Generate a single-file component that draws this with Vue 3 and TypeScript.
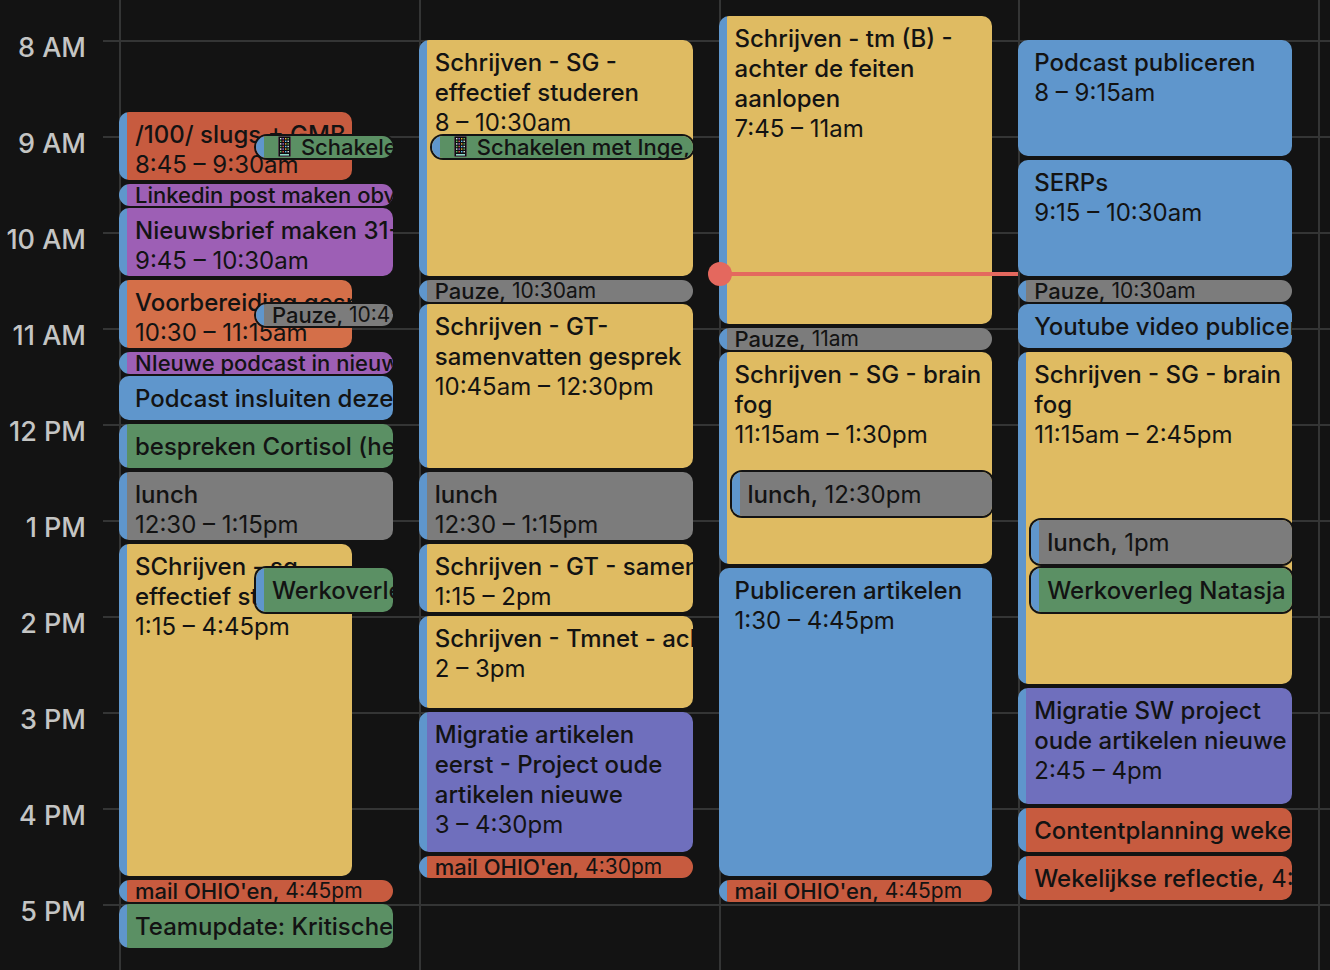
<script setup lang="ts">
type Tone = 'red' | 'orange' | 'yellow' | 'green' | 'blue' | 'indigo' | 'purple' | 'gray'
type Lane = 'full' | 'narrow' | 'half' | 'inset'

interface CalendarEvent {
  title: string
  time?: string
  start: number
  end: number
  tone: Tone
  lane?: Lane
  phone?: boolean
}

interface Day {
  id: string
  events: CalendarEvent[]
  now?: number
}

const FIRST_HOUR = 7.75
const QUARTER_HEIGHT = 24

const hours = ['8 AM', '9 AM', '10 AM', '11 AM', '12 PM', '1 PM', '2 PM', '3 PM', '4 PM', '5 PM']

const days: Day[] = [
  {
    id: 'day-1',
    events: [
      { title: '/100/ slugs + GMB', time: '8:45 – 9:30am', start: 8.75, end: 9.5, tone: 'red', lane: 'narrow' },
      { title: 'Schakelen', start: 9, end: 9.25, tone: 'green', lane: 'half', phone: true },
      { title: 'Linkedin post maken obv', start: 9.5, end: 9.75, tone: 'purple' },
      { title: 'Nieuwsbrief maken 31-', time: '9:45 – 10:30am', start: 9.75, end: 10.5, tone: 'purple' },
      { title: 'Voorbereiding gesprek', time: '10:30 – 11:15am', start: 10.5, end: 11.25, tone: 'orange', lane: 'narrow' },
      { title: 'Pauze', time: '10:45am', start: 10.75, end: 11, tone: 'gray', lane: 'half' },
      { title: 'NIeuwe podcast in nieuw', start: 11.25, end: 11.5, tone: 'purple' },
      { title: 'Podcast insluiten deze', start: 11.5, end: 12, tone: 'blue' },
      { title: 'bespreken Cortisol (he', start: 12, end: 12.5, tone: 'green' },
      { title: 'lunch', time: '12:30 – 1:15pm', start: 12.5, end: 13.25, tone: 'gray' },
      { title: 'SChrijven - sg- effectief studeren', time: '1:15 – 4:45pm', start: 13.25, end: 16.75, tone: 'yellow', lane: 'narrow' },
      { title: 'Werkoverleg', start: 13.5, end: 14, tone: 'green', lane: 'half' },
      { title: "mail OHIO'en", time: '4:45pm', start: 16.75, end: 17, tone: 'red' },
      { title: 'Teamupdate: Kritische', start: 17, end: 17.5, tone: 'green' },
    ],
  },
  {
    id: 'day-2',
    events: [
      { title: 'Schrijven - SG - effectief studeren', time: '8 – 10:30am', start: 8, end: 10.5, tone: 'yellow' },
      { title: 'Schakelen met Inge,', start: 9, end: 9.25, tone: 'green', lane: 'inset', phone: true },
      { title: 'Pauze', time: '10:30am', start: 10.5, end: 10.75, tone: 'gray' },
      { title: 'Schrijven - GT- samenvatten gesprek', time: '10:45am – 12:30pm', start: 10.75, end: 12.5, tone: 'yellow' },
      { title: 'lunch', time: '12:30 – 1:15pm', start: 12.5, end: 13.25, tone: 'gray' },
      { title: 'Schrijven - GT - samen', time: '1:15 – 2pm', start: 13.25, end: 14, tone: 'yellow' },
      { title: 'Schrijven - Tmnet - ach', time: '2 – 3pm', start: 14, end: 15, tone: 'yellow' },
      { title: 'Migratie artikelen eerst - Project oude artikelen nieuwe', time: '3 – 4:30pm', start: 15, end: 16.5, tone: 'indigo' },
      { title: "mail OHIO'en", time: '4:30pm', start: 16.5, end: 16.75, tone: 'red' },
    ],
  },
  {
    id: 'day-3',
    now: 10 + 5 / 12,
    events: [
      { title: 'Schrijven - tm (B) - achter de feiten aanlopen', time: '7:45 – 11am', start: 7.75, end: 11, tone: 'yellow' },
      { title: 'Pauze', time: '11am', start: 11, end: 11.25, tone: 'gray' },
      { title: 'Schrijven - SG - brain fog', time: '11:15am – 1:30pm', start: 11.25, end: 13.5, tone: 'yellow' },
      { title: 'lunch', time: '12:30pm', start: 12.5, end: 13, tone: 'gray', lane: 'inset' },
      { title: 'Publiceren artikelen', time: '1:30 – 4:45pm', start: 13.5, end: 16.75, tone: 'blue' },
      { title: "mail OHIO'en", time: '4:45pm', start: 16.75, end: 17, tone: 'red' },
    ],
  },
  {
    id: 'day-4',
    events: [
      { title: 'Podcast publiceren', time: '8 – 9:15am', start: 8, end: 9.25, tone: 'blue' },
      { title: 'SERPs', time: '9:15 – 10:30am', start: 9.25, end: 10.5, tone: 'blue' },
      { title: 'Pauze', time: '10:30am', start: 10.5, end: 10.75, tone: 'gray' },
      { title: 'Youtube video publicer', start: 10.75, end: 11.25, tone: 'blue' },
      { title: 'Schrijven - SG - brain fog', time: '11:15am – 2:45pm', start: 11.25, end: 14.75, tone: 'yellow' },
      { title: 'lunch', time: '1pm', start: 13, end: 13.5, tone: 'gray', lane: 'inset' },
      { title: 'Werkoverleg Natasja e', start: 13.5, end: 14, tone: 'green', lane: 'inset' },
      { title: 'Migratie SW project oude artikelen nieuwe', time: '2:45 – 4pm', start: 14.75, end: 16, tone: 'indigo' },
      { title: 'Contentplanning weke', start: 16, end: 16.5, tone: 'red' },
      { title: 'Wekelijkse reflectie', time: '4:30pm', start: 16.5, end: 17, tone: 'red' },
    ],
  },
]

const screenColors = ['#e8e8e8', '#5ac8fa', '#e0564a', '#63c466', '#f2b33d', '#9a6be0']
const appDots = Array.from({ length: 24 }, (_, i) => ({
  x: 2 + (i % 4) * 2.5,
  y: 2 + Math.floor(i / 4) * 2.6,
  fill: screenColors[(i * 5 + Math.floor(i / 4)) % screenColors.length],
}))

const quarters = (e: CalendarEvent) => (e.end - e.start) * 4

function rowsOf(e: CalendarEvent) {
  const line = (hour: number) => Math.round((hour - FIRST_HOUR) * 4) + 1
  return { gridRow: `${line(e.start)} / ${line(e.end)}` }
}

function classesOf(e: CalendarEvent) {
  const q = quarters(e)
  return [
    `tone-${e.tone}`,
    `lane-${e.lane ?? 'full'}`,
    { tiny: q === 1, single: q <= 2, compact: q <= 4 },
  ]
}

const nowTop = (hour: number) => ({ top: `${(hour - FIRST_HOUR) * 4 * QUARTER_HEIGHT}px` })
</script>

<template>
  <main class="calendar">
    <div class="hours">
      <div v-for="hour in hours" :key="hour" class="hour">{{ hour }}</div>
    </div>
    <div class="board">
      <section v-for="day in days" :key="day.id" class="day">
        <div class="slots">
          <button
            v-for="event in day.events"
            :key="event.start"
            type="button"
            class="event"
            :class="classesOf(event)"
            :style="rowsOf(event)"
          >
            <svg v-if="event.phone" class="phone" viewBox="0 0 13 21" aria-hidden="true">
              <rect x="0.5" y="0.5" width="12" height="20" rx="1" fill="#0c0c10" stroke="#4a4146" />
              <rect v-for="(dot, i) in appDots" :key="i" :x="dot.x" :y="dot.y" width="1.4" height="1.4" :fill="dot.fill" />
              <rect x="2" y="18" width="9" height="1.6" fill="#8fd9c8" />
            </svg>
            <span class="title">{{ event.title }}<template v-if="event.time && quarters(event) <= 2">,&nbsp;</template></span>
            <span v-if="event.time" class="time">{{ event.time }}</span>
          </button>
          <div v-if="day.now" class="now" :style="nowTop(day.now)"></div>
        </div>
      </section>
    </div>
  </main>
</template>

<style>
body {
  margin: 0;
  background: #131313;
}
</style>

<style scoped>
.calendar {
  display: grid;
  grid-template-columns: 103px 1fr;
  min-height: 100vh;
  overflow: hidden;
  background: #131313;
  color: #131313;
  font-family: Inter, "Liberation Sans", sans-serif;
}

.hour {
  height: 96px;
  padding-right: 17px;
  color: #c4c5c4;
  font-size: 27px;
  font-weight: 500;
  line-height: 96px;
  text-align: right;
  white-space: nowrap;
}

.hours {
  height: 960px;
}

.board {
  display: grid;
  grid-template-columns: repeat(4, minmax(0, 1fr));
  padding: 0 12px 0 16px;
  background: linear-gradient(#343535 2px, transparent 2px) 0 40px / 100% 96px;
}

.day {
  padding: 16px 26px 0 0;
  box-shadow: inset 2px 0 #343535;
}

.day:last-child {
  box-shadow: inset 2px 0 #343535, 2px 0 #343535;
}

.slots {
  position: relative;
  display: grid;
  grid-template-columns: minmax(0, 1fr);
  grid-template-rows: repeat(39, 24px);
}

.event {
  display: flex;
  flex-direction: column;
  grid-column: 1;
  min-width: 0;
  margin: 0 0 4px;
  padding: 8px 4px 0 16px;
  overflow: hidden;
  border: 0;
  border-radius: 10px;
  background: linear-gradient(90deg, #5f96cc 8px, var(--tone) 8px);
  color: inherit;
  font: 400 24px/30px Inter, "Liberation Sans", sans-serif;
  text-align: left;
  cursor: pointer;
}

.title {
  flex: none;
  font-weight: 500;
}

.time {
  flex: none;
  white-space: nowrap;
}

.compact {
  white-space: nowrap;
}

.single {
  flex-direction: row;
  padding-right: 0;
}

.tiny {
  margin-bottom: 2px;
  padding-top: 0;
  border-radius: 11px;
  font-size: 22px;
  line-height: 22px;
}

.tiny .time {
  font-size: 21px;
}

.lane-narrow {
  margin-right: 15%;
}

.lane-half,
.lane-inset {
  z-index: 1;
  box-shadow: 0 0 0 2px #131313;
}

.lane-half {
  margin-left: 50%;
}

.lane-inset {
  margin-left: 13px;
}

.tone-red { --tone: #c75b3f; }
.tone-orange { --tone: #d46f49; }
.tone-yellow { --tone: #dfbb62; }
.tone-green { --tone: #5b9064; }
.tone-blue { --tone: #5f96cc; }
.tone-indigo { --tone: #6f6fbd; }
.tone-purple { --tone: #9d5fb5; }
.tone-gray { --tone: #7c7c7c; }

.phone {
  flex: none;
  width: 13px;
  height: 21px;
  margin: 0 10px 0 6px;
}

.now {
  position: absolute;
  z-index: 2;
  right: -26px;
  left: 0;
  height: 4px;
  background: #e4685e;
}

.now::before {
  content: "";
  position: absolute;
  top: -10px;
  left: -11px;
  width: 24px;
  height: 24px;
  border-radius: 50%;
  background: #e4685e;
}
</style>
